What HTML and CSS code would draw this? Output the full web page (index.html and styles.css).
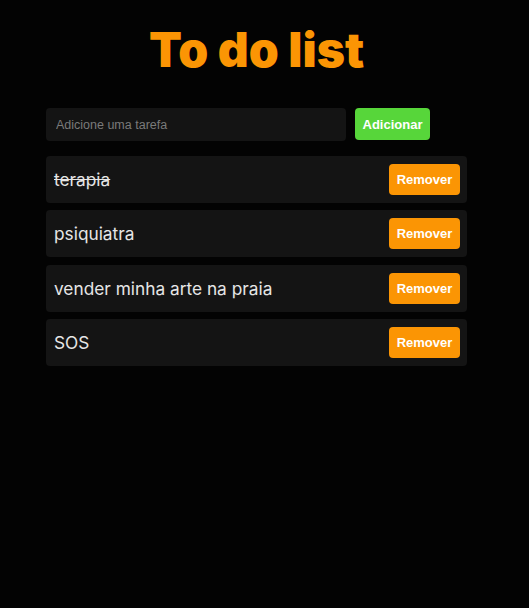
FILE: index.html
```html
<!DOCTYPE html>
<html lang="pt-BR">
<head>
<meta charset="utf-8">
<title>To do list</title>
<link rel="stylesheet" href="styles.css">
</head>
<body>
<div class="app">
  <h1 class="title">To do list</h1>
  <div class="form">
    <input class="task-input" type="text" placeholder="Adicione uma tarefa">
    <button class="btn btn-add">Adicionar</button>
  </div>
  <ul class="list">
    <li class="item"><span class="item-text done">terapia</span><button class="btn btn-remove">Remover</button></li>
    <li class="item"><span class="item-text">psiquiatra</span><button class="btn btn-remove">Remover</button></li>
    <li class="item"><span class="item-text">vender minha arte na praia</span><button class="btn btn-remove">Remover</button></li>
    <li class="item"><span class="item-text">SOS</span><button class="btn btn-remove">Remover</button></li>
  </ul>
</div>
</body>
</html>
```
FILE: styles.css
```css
html, body {
  margin: 0;
  padding: 0;
  background: #030303;
}
body {
  font-family: "Liberation Sans", Arial, sans-serif;
}
.app {
  width: 421px;
  margin-left: 46px;
  padding-top: 21px;
}
.title {
  margin: 0;
  width: 421px;
  text-align: center;
  font-family: Inter, "Open Sans", sans-serif;
  font-weight: 900;
  font-size: 48px;
  line-height: 57px;
  color: #fb9504;
  letter-spacing: 0;
}
.form {
  display: flex;
  gap: 9px;
  margin-top: 30px;
}
.task-input {
  box-sizing: border-box;
  width: 300px;
  height: 33px;
  border: none;
  outline: none;
  border-radius: 4px;
  background: #141414;
  color: #ddd;
  padding: 0 10px;
  font-family: "Liberation Sans", Arial, sans-serif;
  font-size: 12.5px;
}
.task-input::placeholder {
  color: #7a7a7a;
}
.btn {
  border: none;
  border-radius: 4px;
  color: #fff;
  font-family: "Liberation Sans", Arial, sans-serif;
  font-weight: bold;
  font-size: 13px;
  cursor: pointer;
}
.btn-add {
  width: 75px;
  height: 32px;
  background: #57d63a;
}
.list {
  list-style: none;
  margin: 15px 0 0;
  padding: 0;
  display: flex;
  flex-direction: column;
  gap: 7.33px;
}
.item {
  box-sizing: border-box;
  height: 47px;
  display: flex;
  align-items: center;
  justify-content: space-between;
  padding: 0 7px 0 8px;
  background: #141414;
  border-radius: 4px;
}
.item-text {
  font-family: Inter, "Noto Sans", sans-serif;
  font-size: 17.3px;
  color: #e6e6e6;
}
.item-text.done {
  text-decoration: line-through;
}
.btn-remove {
  width: 71px;
  height: 31px;
  background: #fb9504;
}
```
